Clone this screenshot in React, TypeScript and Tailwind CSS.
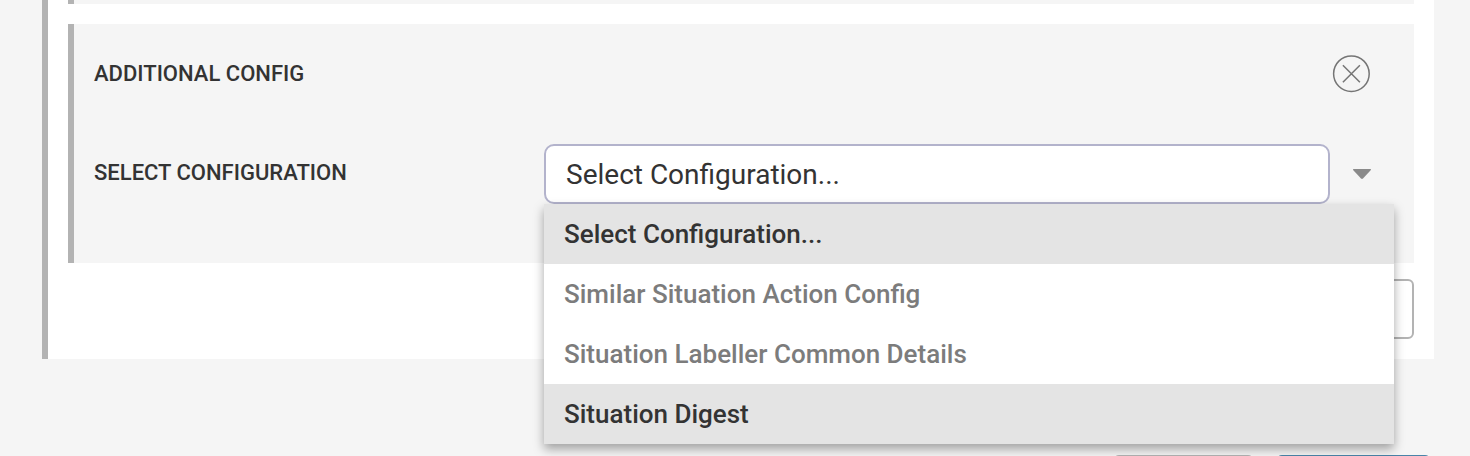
import { useState } from "react";

const options = [
  { label: "Select Configuration...", active: true },
  { label: "Similar Situation Action Config", active: false },
  { label: "Situation Labeller Common Details", active: false },
  { label: "Situation Digest", active: true },
];

function CloseIcon() {
  return (
    <svg width="38" height="38" viewBox="0 0 38 38" fill="none" stroke="#757575" strokeWidth="1.5">
      <circle cx="19.4" cy="18.7" r="17.8" />
      <path d="M10.9 10.2 L27.9 27.2 M27.9 10.2 L10.9 27.2" />
    </svg>
  );
}

function ConfigSelect() {
  const [value] = useState(options[0].label);
  return (
    <div className="relative flex flex-1 items-center">
      <div className="flex h-[60px] w-[786px] items-center rounded-[10px] border-2 border-[#b3b3cc] bg-white pl-5 pt-[2px] text-[28px] text-[#333333]">
        {value}
      </div>
      <svg className="ml-[22px]" width="20" height="12" viewBox="0 0 20 12" fill="#8a8a8a">
        <path d="M1.2 1 H18.8 L18.9 2 L11 10.6 Q10 11.4 9 10.6 L1.1 2 Z" />
      </svg>
      {/* open menu sits over the card below */}
      <div className="absolute left-0 top-[60px] z-10 w-[850px] bg-white shadow-[0_5px_10px_rgba(0,0,0,0.35)]">
        {options.map((o) => (
          <div
            key={o.label}
            className={
              o.active
                ? "flex h-[60px] items-center bg-[#e4e4e4] pl-5 text-[26px] font-medium text-[#333333]"
                : "flex h-[60px] items-center bg-white pl-5 text-[26px] font-medium text-[#7c7c7c]"
            }
          >
            {o.label}
          </div>
        ))}
      </div>
    </div>
  );
}

export default function App() {
  return (
    <div className="h-[456px] w-[1470px] overflow-hidden bg-[#f5f5f5] font-['Roboto',sans-serif]">
      <div className="ml-[42px] h-[359px] w-[1392px] border-l-[6px] border-[#b3b3b3] bg-white pl-5 pr-5">
        <div className="h-1 border-l-[6px] border-[#b3b3b3] bg-[#f5f5f5]" />
        <div className="mt-5 h-[239px] border-l-[6px] border-[#b3b3b3] bg-[#f5f5f5] pl-5">
          <div className="flex h-[100px] items-center justify-between pr-[44px]">
            <span className="mb-[2px] text-[22px] font-medium text-[#333333]">ADDITIONAL CONFIG</span>
            <CloseIcon />
          </div>
          <div className="mt-5 flex items-center">
            <span className="mb-[3px] w-[450px] text-[22px] font-medium text-[#333333]">SELECT CONFIGURATION</span>
            <ConfigSelect />
          </div>
        </div>
        <div className="mt-4 flex justify-end">
          <div className="h-[60px] w-[160px] rounded-[6px] border-2 border-[#b3b3b3] bg-white" />
        </div>
      </div>
      <div className="mt-24 flex justify-end gap-[22px] pr-[39px]">
        <div className="h-10 w-[141px] rounded-[6px] border-2 border-[#b3b3b3] bg-white" />
        <div className="h-10 w-[155px] rounded-[6px] border-2 border-[#4a84a8] bg-[#4a84a8]" />
      </div>
    </div>
  );
}
